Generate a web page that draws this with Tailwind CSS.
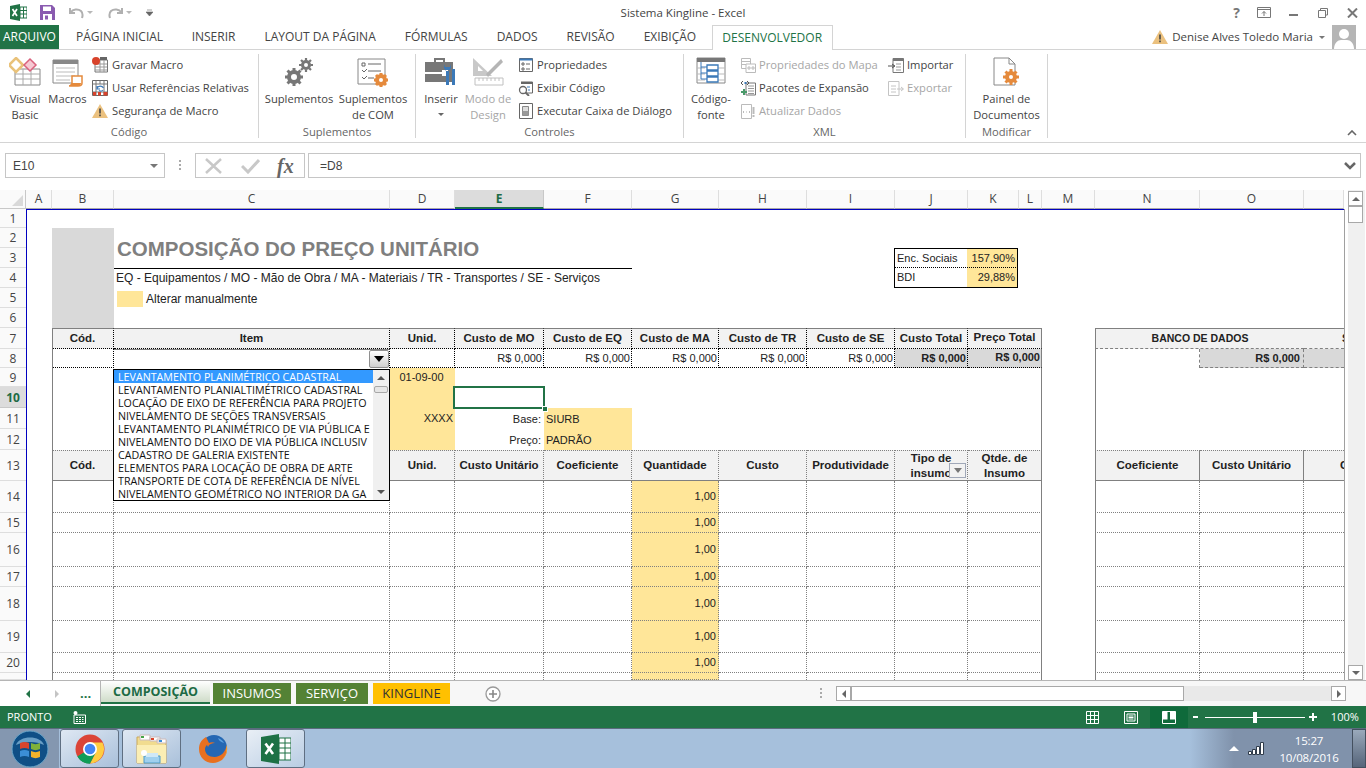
<!DOCTYPE html>
<html lang="pt-BR">
<head>
<meta charset="UTF-8">
<title>Sistema Kingline - Excel</title>
<script src="https://cdn.jsdelivr.net/npm/@tailwindcss/browser@4"></script>
</head>
<body class="w-[1366px] h-[768px] overflow-hidden bg-white font-['Open_Sans',sans-serif] text-[11.2px] text-[#444]">

<!-- title bar -->
<div class="h-[25px] grid grid-cols-[1fr_auto_1fr] items-center">
  <div class="flex items-center h-full">
    <svg class="ml-[10px]" width="17" height="17" viewBox="0 0 17 17"><path d="M0 2 10 0v17L0 15z" fill="#217346"/><path d="M10 3h7v11h-7z" fill="#fff" stroke="#217346"/><path d="M10 6.500h7M10 10h7M13.500 3v11" stroke="#217346"/><path d="M2.500 5 7 12M7 5l-4.500 7" stroke="#fff" stroke-width="1.700"/></svg>
    <svg class="ml-[13px]" width="15" height="15" viewBox="0 0 15 15"><path d="M0 0h12l3 3v12H0z" fill="#8a5bb0"/><path d="M3 1.500h8v4.500H3z" fill="#fff"/><path d="M3 9h9v6H3z" fill="#fff"/><path d="M5 10.500h3v4H5z" fill="#8a5bb0"/></svg>
    <svg class="ml-[14px]" width="15" height="13" viewBox="0 0 15 13"><path d="M1 2v5h5M1.500 6.500C4 3 9 2.500 12 5c2 2 2 4 1 7" fill="none" stroke="#b0b0b0" stroke-width="2"/></svg>
    <span class="ml-[3px] w-0 h-0 border-x-[3px] border-x-transparent border-t-[3px] border-t-[#b8b8b8]"></span>
    <svg class="ml-[15px]" width="15" height="13" viewBox="0 0 15 13"><path d="M14 2v5H9M13.500 6.500C11 3 6 2.500 3 5c-2 2-2 4-1 7" fill="none" stroke="#b0b0b0" stroke-width="2"/></svg>
    <span class="ml-[3px] w-0 h-0 border-x-[3px] border-x-transparent border-t-[3px] border-t-[#b8b8b8]"></span>
    <svg class="ml-[14px]" width="7" height="7" viewBox="0 0 7 7"><path d="M1 1h5M0 3h7L3.500 7z" fill="#666" stroke="#666" stroke-width=".6"/></svg>
  </div>
  <div class="text-[11.5px] text-[#444]">Sistema Kingline - Excel</div>
  <div class="flex items-center justify-end h-full pr-[8px]">
    <span class="text-[14px] font-bold text-[#777] leading-none">?</span>
    <svg class="ml-[17px]" width="14" height="11" viewBox="0 0 14 11"><path d="M.5.500h13v10H.5z" fill="none" stroke="#777"/><path d="M.5 2.500h13M7 9V4.500M5 6.500l2-2 2 2" fill="none" stroke="#777"/></svg>
    <span class="ml-[18px] w-[9px] h-[2px] bg-[#777] mt-[4px]"></span>
    <svg class="ml-[20px]" width="10" height="10" viewBox="0 0 10 10"><path d="M2.500 2.500V.5h7v6.500h-2M.5 2.500h7v7h-7z" fill="none" stroke="#777"/></svg>
    <svg class="ml-[19px]" width="11" height="10" viewBox="0 0 11 10"><path d="M1 .5 10 9.500M10 .5 1 9.500" stroke="#777" stroke-width="2"/></svg>
  </div>
</div>

<!-- ribbon tabs -->
<div class="h-[25px] flex items-stretch border-b border-[#d4d4d4] text-[12px]">
  <div class="w-[59px] bg-[#217346] text-white flex items-center justify-center">ARQUIVO</div>
  <div class="ml-[3px] px-[14px] flex items-center">PÁGINA INICIAL</div>
  <div class="px-[14.500px] flex items-center">INSERIR</div>
  <div class="px-[14.500px] flex items-center">LAYOUT DA PÁGINA</div>
  <div class="px-[14.500px] flex items-center">FÓRMULAS</div>
  <div class="px-[14.500px] flex items-center">DADOS</div>
  <div class="px-[14.500px] flex items-center">REVISÃO</div>
  <div class="px-[14.500px] flex items-center">EXIBIÇÃO</div>
  <div class="ml-[1px] w-[121px] h-[25px] bg-white border border-b-0 border-[#d4d4d4] text-[#217346] flex items-center justify-center">DESENVOLVEDOR</div>
  <div class="ml-auto flex items-center pr-[10px]">
    <svg width="16" height="14" viewBox="0 0 16 14"><path d="M8 0 16 14H0z" fill="#ebc17f"/><path d="M7.200 4.500h1.600v5H7.200zM7.200 10.500h1.600v1.800H7.200z" fill="#444"/></svg>
    <span class="ml-[4px] text-[11.5px]">Denise Alves Toledo Maria</span>
    <span class="ml-[6px] w-0 h-0 border-x-[3px] border-x-transparent border-t-[3px] border-t-[#777]"></span>
    <svg class="ml-[7px]" width="24" height="24" viewBox="0 0 24 24"><path d="M0 0h24v24H0z" fill="#b5b5b5"/><circle cx="12" cy="9" r="5" fill="#fff"/><path d="M2 24c0-6 4-9 7-9h6c3 0 7 3 7 9z" fill="#fff"/></svg>
  </div>
</div>

<!-- ribbon -->
<div class="h-[93px] flex border-b border-[#d4d4d4] relative text-[#444]">
  <div class="w-[259px] h-[84px] mt-[4px] border-r border-[#d4d4d4] flex flex-col">
    <div class="flex-1 flex">
      <div class="w-[50px] flex flex-col items-center">
        <svg class="mt-[3px]" width="32" height="30" viewBox="0 0 32 30"><path d="M6 12h25v16H6z" fill="#fff" stroke="#888"/><path d="M6 17h25M6 22h25M14 12v16M22 12v16" stroke="#aaa"/><path d="M7 1l7 7-7 7-7-7z" fill="#fff" stroke="#e9c27a" stroke-width="2.500"/><path d="M21 2l6 6-6 6-6-6z" fill="#f6c9d3" stroke="#d9627e" stroke-width="1.500"/></svg>
        <div class="mt-[4px] text-center leading-[16px]">Visual<br>Basic</div>
      </div>
      <div class="w-[35px] flex flex-col items-center">
        <svg class="mt-[3px]" width="32" height="30" viewBox="0 0 32 30"><path d="M1 3h25v23H1z" fill="#fff" stroke="#888"/><path d="M1 3h25v4H1z" fill="#888"/><path d="M4 11h19M4 15h19M4 19h19M4 23h14" stroke="#bbb"/><path d="M20 19h10v7c0 2-2 3-4 3h-9c2 0 3-1 3-3z" fill="#fff" stroke="#e58a3c" stroke-width="1.500"/><path d="M17 29h9c2 0 3-1 3-3H20z" fill="#e58a3c"/></svg>
        <div class="mt-[4px] text-center leading-[16px]">Macros</div>
      </div>
      <div class="ml-[7px] flex flex-col pt-[3px] gap-[7px]">
        <div class="flex items-center h-[16px]"><svg width="16" height="16" viewBox="0 0 16 16"><path d="M3 3h12.500v12H3z" fill="#fff" stroke="#777"/><path d="M3 7h12M3 10h12M3 13h12M8 3v12M12 3v12" stroke="#999"/><path d="M8 0h7v3H8z" fill="#666"/><circle cx="4" cy="4" r="4" fill="#d8432b"/></svg><span class="ml-[4px]">Gravar Macro</span></div>
        <div class="flex items-center h-[16px]"><svg width="16" height="16" viewBox="0 0 16 16"><path d="M.5.500h15v15H.5z" fill="#fff" stroke="#666"/><path d="M.5 4h15M.5 12h15M4 .5v15M12 .5v15M8 .5V4M8 12v3.500" stroke="#777"/><path d="M1 12h3v3.500H1zM6 12h3v3.500H6zM11.500 12h4v3.500h-4z" fill="#d8432b"/><path d="M5 8.500C6 5.500 10 5.500 11.500 8M5 6v3h3M7 10.500c1.500 1 3 .8 4-.5" fill="none" stroke="#3b79b8" stroke-width="1.200"/></svg><span class="ml-[4px]">Usar Referências Relativas</span></div>
        <div class="flex items-center h-[16px]"><svg width="16" height="14" viewBox="0 0 16 14"><path d="M8 0 16 14H0z" fill="#ebc17f"/><path d="M7.200 4.500h1.600v5H7.200zM7.200 10.500h1.600v1.800H7.200z" fill="#444"/></svg><span class="ml-[4px]">Segurança de Macro</span></div>
      </div>
    </div>
    <div class="text-center h-[20px] leading-[18px] text-[#666]">Código</div>
  </div>

  <div class="w-[157px] h-[84px] mt-[4px] border-r border-[#d4d4d4] flex flex-col">
    <div class="flex-1 flex pl-[3px]">
      <div class="w-[74px] flex flex-col items-center">
        <svg class="mt-[3px]" width="30" height="30" viewBox="0 0 30 30"><g fill="none" stroke="#777"><circle cx="10" cy="20" r="5" stroke-width="4"/><path d="M10 11v3M10 26v3M1 20h3M16 20h3M3.500 13.500l2.200 2.200M14.300 24.300l2.200 2.200M3.500 26.500l2.200-2.200M14.300 15.700l2.200-2.200" stroke-width="3"/><circle cx="22" cy="8" r="3.500" stroke-width="3"/><path d="M22 1v2.500M22 12.500V15M15 8h2.500M26.500 8H29M17 3l1.800 1.800M25.200 11.200 27 13M17 13l1.800-1.800M25.200 4.800 27 3" stroke-width="2.200"/></g></svg>
        <div class="mt-[4px] leading-[16px]">Suplementos</div>
      </div>
      <div class="w-[74px] flex flex-col items-center">
        <svg class="mt-[3px]" width="32" height="30" viewBox="0 0 32 30"><path d="M1 2h27v25H1z" fill="#fff" stroke="#888"/><path d="M5 6h3v3H5zM11 7h13M5 13l2 2 3-3M11 14h13M5 20l2 2 3-3M11 21h6" fill="none" stroke="#666"/><circle cx="24" cy="23" r="4" fill="#fff" stroke="#e58a3c" stroke-width="4"/><path d="M24 16v3M24 27v3M17 23h3M28 23h3M19 18l2 2M27 26l2 2M19 28l2-2M27 20l2-2" stroke="#e58a3c" stroke-width="3"/></svg>
        <div class="mt-[4px] text-center leading-[16px]">Suplementos<br>de COM</div>
      </div>
    </div>
    <div class="text-center h-[20px] leading-[18px] text-[#666]">Suplementos</div>
  </div>

  <div class="w-[268px] h-[84px] mt-[4px] border-r border-[#d4d4d4] flex flex-col">
    <div class="flex-1 flex pl-[7px]">
      <div class="w-[36px] flex flex-col items-center">
        <svg class="mt-[3px]" width="32" height="30" viewBox="0 0 32 30"><path d="M10 5V2h9v3" fill="none" stroke="#777" stroke-width="2"/><path d="M0 5h28v20H0z" fill="#777"/><path d="M0 15h17v2H0z" fill="#fff"/><path d="M17 13h6v6h-6z" fill="#fff"/><path d="M21 13h3v15h-3zM19 7v4l2 3h3l2-3V7l-1 3h-5z" fill="#3b79b8"/><path d="M27 12h3v16h-3z" fill="#3b79b8"/></svg>
        <div class="mt-[4px] text-center leading-[16px]">Inserir</div>
        <span class="mt-[6px] w-0 h-0 border-x-[3px] border-x-transparent border-t-[3px] border-t-[#666]"></span>
      </div>
      <div class="w-[58px] flex flex-col items-center text-[#a6a6a6]">
        <svg class="mt-[3px]" width="32" height="30" viewBox="0 0 32 30"><path d="M1 1 20 19H1z" fill="#c8c8c8"/><path d="M6 9l5 5H6z" fill="#fff"/><path d="M14 17 29 2l2 3-15 15z" fill="#b5b5b5"/><path d="M3 21h28v7H3z" fill="#fff" stroke="#c0c0c0"/><path d="M7 21v3M11 21v3M15 21v3M19 21v3M23 21v3M27 21v3" stroke="#c0c0c0"/></svg>
        <div class="mt-[4px] text-center leading-[16px]">Modo de<br>Design</div>
      </div>
      <div class="ml-[2px] flex flex-col pt-[3px] gap-[7px]">
        <div class="flex items-center h-[16px]"><svg width="14" height="14" viewBox="0 0 14 14"><path d="M.5.500h13v13H.5z" fill="#fff" stroke="#666"/><path d="M.5.500h13v2H.5z" fill="#3b79b8"/><path d="M3 5h2v2H3zM3 10h2v2H3z" fill="none" stroke="#666"/><path d="M7 6h4M7 11h4" stroke="#666"/></svg><span class="ml-[4px]">Propriedades</span></div>
        <div class="flex items-center h-[16px]"><svg class="-ml-[1px]" width="15" height="15" viewBox="0 0 15 15"><path d="M3 1h11.500v11H8" fill="none" stroke="#666"/><path d="M3 1h11.500v2H3z" fill="#666"/><path d="M9 6h3M10 9h2" stroke="#3b79b8"/><circle cx="5" cy="9" r="3.500" fill="#fff" stroke="#666" stroke-width="1.300"/><path d="M7.500 11.500 11 15" stroke="#666" stroke-width="1.800"/></svg><span class="ml-[4px]">Exibir Código</span></div>
        <div class="flex items-center h-[16px]"><svg width="14" height="16" viewBox="0 0 14 16"><path d="M.5.500h13v15H.5z" fill="#fff" stroke="#666"/><path d="M3.500 3.500h6v9h-6z" fill="#ddd" stroke="#888"/><path d="M3.500 8h6v4.500h-6z" fill="#999"/></svg><span class="ml-[4px]">Executar Caixa de Diálogo</span></div>
      </div>
    </div>
    <div class="text-center h-[20px] leading-[18px] text-[#666]">Controles</div>
  </div>

  <div class="w-[282px] h-[84px] mt-[4px] border-r border-[#d4d4d4] flex flex-col">
    <div class="flex-1 flex">
      <div class="w-[54px] flex flex-col items-center">
        <svg class="mt-[3px]" width="30" height="30" viewBox="0 0 30 30"><path d="M1 1h28v25H1z" fill="#fff" stroke="#888"/><path d="M1 1h28v4H1z" fill="#777"/><path d="M1 11h8M1 17h8M1 23h8M22 11h7M22 17h7M22 23h7" stroke="#bbb"/><path d="M5 5v17h6M5 10h6M5 16h6" fill="none" stroke="#3b79b8"/><path d="M11 8h11v5H11zM11 14h11v5H11zM11 20h11v5H11z" fill="#fff" stroke="#3b79b8" stroke-width="1.300"/></svg>
        <div class="mt-[4px] text-center leading-[16px]">Código-<br>fonte</div>
      </div>
      <div class="ml-[3px] w-[147px] flex flex-col pt-[3px] gap-[7px]">
        <div class="flex items-center h-[16px] text-[#a6a6a6]"><svg width="15" height="15" viewBox="0 0 15 15" fill="none" stroke="#bbb"><path d="M.5.500h9v10h-9z"/><path d="M.5 3.500h9M.5 6.500h9" /><path d="M5 6h9.500v8.500H5z" fill="#fff"/><path d="M7 9h2v2H7zM11 9h2v2h-2z"/></svg><span class="ml-[3px]">Propriedades do Mapa</span></div>
        <div class="flex items-center h-[16px]"><svg width="15" height="16" viewBox="0 0 15 16"><path d="M5 3h9.500v12H5z" fill="#fff" stroke="#777"/><path d="M7 6h6M7 8.500h6M7 11h6M7 13.500h6" stroke="#999"/><path d="M0 3l2-2M0 3l2 2M6 1l2 2-2 2" fill="none" stroke="#555"/><path d="M3.500 2h2v2h-2z" fill="#3b79b8"/><path d="M3 9v6M0 12h6" stroke="#4a9a6a" stroke-width="2"/></svg><span class="ml-[3px]">Pacotes de Expansão</span></div>
        <div class="flex items-center h-[16px] text-[#a6a6a6]"><svg width="15" height="15" viewBox="0 0 15 15" fill="none" stroke="#bbb"><path d="M.5.500h10v14H.5z"/><path d="M3 7l-1 1 1 1M8 7l1 1-1 1M5 8h1" /><path d="M12.500 3v7M12.500 11v2" stroke-width="2"/></svg><span class="ml-[3px]">Atualizar Dados</span></div>
      </div>
      <div class="flex flex-col pt-[3px] gap-[7px]">
        <div class="flex items-center h-[16px]"><svg width="16" height="15" viewBox="0 0 16 15"><path d="M5 .5h10.500v14H5z" fill="#fff" stroke="#777"/><path d="M5 .5h10.500v2.500H5z" fill="#777"/><path d="M8 6h5M8 9h5M8 12h5" stroke="#999"/><path d="M0 8h6M4 6l3 2-3 2" fill="none" stroke="#555"/></svg><span class="ml-[3px]">Importar</span></div>
        <div class="flex items-center h-[16px] text-[#a6a6a6]"><svg width="16" height="15" viewBox="0 0 16 15" fill="none" stroke="#c4c4c4"><path d="M.5.500h10.500v14H.5z"/><path d="M3 5h5M3 8h5M3 11h5"/><path d="M9 8h6M13 6l2.500 2-2.500 2"/></svg><span class="ml-[3px]">Exportar</span></div>
      </div>
    </div>
    <div class="text-center h-[20px] leading-[18px] text-[#666]">XML</div>
  </div>

  <div class="w-[82px] h-[84px] mt-[4px] border-r border-[#d4d4d4] flex flex-col">
    <div class="flex-1 flex flex-col items-center">
      <svg class="mt-[3px]" width="28" height="30" viewBox="0 0 28 30"><path d="M1 1h15l6 6v12M22 20v8H1V1" fill="#fff" stroke="#888"/><path d="M16 1v6h6" fill="none" stroke="#888"/><circle cx="18" cy="20" r="4" fill="#fff" stroke="#e58a3c" stroke-width="4"/><path d="M18 12v3M18 25v3M10 20h3M23 20h3M12.500 14.500l2 2M21.500 23.500l2 2M12.500 25.500l2-2M21.500 16.500l2-2" stroke="#e58a3c" stroke-width="3"/></svg>
      <div class="mt-[4px] text-center leading-[16px]">Painel de<br>Documentos</div>
    </div>
    <div class="text-center h-[20px] leading-[18px] text-[#666]">Modificar</div>
  </div>
  <svg class="absolute left-[1347px] top-[80px]" width="10" height="6" viewBox="0 0 10 6"><path d="M1 5l4-4 4 4" fill="none" stroke="#666" stroke-width="1.600"/></svg>
</div>

<!-- formula bar -->
<div class="h-[47px] flex items-start pt-[10px] text-[#444]">
  <div class="ml-[5px] w-[160px] h-[25px] border border-[#c6c6c6] flex items-center pl-[7px] text-[12px] font-['Liberation_Sans',sans-serif]">E10<span class="ml-auto mr-[6px] w-0 h-0 border-x-[4px] border-x-transparent border-t-[4px] border-t-[#777]"></span></div>
  <div class="w-[30px] h-[25px] flex items-center justify-center"><svg width="3" height="11" viewBox="0 0 3 11"><path d="M0 0h2v2H0zM0 4h2v2H0zM0 8h2v2H0z" fill="#aaa"/></svg></div>
  <div class="w-[110px] h-[25px] border border-[#c6c6c6] flex items-center pl-[9px]">
    <svg width="18" height="16" viewBox="0 0 18 16"><path d="M1 1 16 15M16 1 1 15" stroke="#c8c8c8" stroke-width="2.500"/></svg>
    <svg class="ml-[18px]" width="19" height="16" viewBox="0 0 19 16"><path d="M1 8l6 6L18 2" fill="none" stroke="#c8c8c8" stroke-width="3"/></svg>
    <span class="ml-[17px] font-['Liberation_Serif',serif] italic font-bold text-[20px] leading-none text-[#666]">fx</span>
  </div>
  <div class="ml-[3px] w-[1053px] h-[25px] border border-[#c6c6c6] flex items-center pl-[11px] pr-[4px] text-[12px] font-['Liberation_Sans',sans-serif]">=D8<svg class="ml-auto" width="12" height="8" viewBox="0 0 12 8"><path d="M1 1l5 5 5-5" fill="none" stroke="#666" stroke-width="2.500"/></svg></div>
</div>

<!-- sheet -->
<div class="h-[490px] flex relative overflow-hidden">
  <div id="sheet" class="w-[1344px] grid grid-cols-[26px_26px_62px_276px_65px_89px_88px_87px_88px_88px_73px_51px_23px_53px_105px_104px_40px] grid-rows-[19px_19px_20px_20px_20px_20px_20px_21px_19px_19px_21px_21px_21px_31px_32px_20px_34px_20px_34px_32px_20px_7px] font-['Liberation_Sans',sans-serif] text-[11px] text-[#222]"></div>

  <!-- frozen-pane lines -->
  <div class="absolute left-[26px] top-[19px] w-px h-[471px] bg-[#0000c0]"></div>
  <div class="absolute left-[26px] top-[19px] w-[1318px] h-px bg-[#0000c0]"></div>
  <div class="absolute left-[1344px] top-[19px] w-px h-[471px] bg-[#a0a0a0]"></div>

  <!-- list of the cell C8 -->
  <div class="absolute left-[369px] top-[160px] w-[20px] h-[18px] border border-[#8f8f8f] rounded-[2px] bg-gradient-to-b from-white to-[#cfcfcf] flex items-center justify-center"><span class="w-0 h-0 border-x-[5px] border-x-transparent border-t-[6px] border-t-black"></span></div>
  <div class="absolute left-[113px] top-[179px] w-[277px] h-[132px] border border-black bg-white flex font-['Open_Sans',sans-serif] text-[10.700px] text-[#111] leading-[14px]">
    <div class="w-[259px] overflow-hidden whitespace-nowrap">
      <div class="h-[13px] bg-[#3399ff] text-white pl-[4px]">LEVANTAMENTO PLANIMÉTRICO CADASTRAL</div>
      <div class="h-[13px] pl-[4px]">LEVANTAMENTO PLANIALTIMÉTRICO CADASTRAL</div>
      <div class="h-[13px] pl-[4px]">LOCAÇÃO DE EIXO DE REFERÊNCIA PARA PROJETO</div>
      <div class="h-[13px] pl-[4px]">NIVELAMENTO DE SEÇÕES TRANSVERSAIS</div>
      <div class="h-[13px] pl-[4px]">LEVANTAMENTO PLANIMÉTRICO DE VIA PÚBLICA E</div>
      <div class="h-[13px] pl-[4px]">NIVELAMENTO DO EIXO DE VIA PÚBLICA INCLUSIV</div>
      <div class="h-[13px] pl-[4px]">CADASTRO DE GALERIA EXISTENTE</div>
      <div class="h-[13px] pl-[4px]">ELEMENTOS PARA LOCAÇÃO DE OBRA DE ARTE</div>
      <div class="h-[13px] pl-[4px]">TRANSPORTE DE COTA DE REFERÊNCIA DE NÍVEL</div>
      <div class="h-[13px] pl-[4px]">NIVELAMENTO GEOMÉTRICO NO INTERIOR DA GA</div>
    </div>
    <div class="flex-1 bg-[#f0f0f0] flex flex-col items-center">
      <span class="mt-[6px] w-0 h-0 border-x-[4px] border-x-transparent border-b-[4px] border-b-[#555]"></span>
      <span class="mt-[6px] w-[14px] h-[7px] bg-[#e6e6e6] border border-[#a8a8a8] rounded-[2px]"></span>
      <span class="mt-auto mb-[6px] w-0 h-0 border-x-[4px] border-x-transparent border-t-[4px] border-t-[#555]"></span>
    </div>
  </div>

  <!-- vertical scrollbar -->
  <div class="ml-[1px] w-[21px] flex flex-col bg-white pl-[3px]">
    <div class="w-[17px] h-full bg-[#f0f0f0] flex flex-col">
      <div class="mt-[1px] w-[15px] h-[15px] bg-white border border-[#a8a8a8] flex items-center justify-center"><span class="w-0 h-0 border-x-[4px] border-x-transparent border-b-[4px] border-b-[#666]"></span></div>
      <div class="w-[15px] h-[17px] bg-white border border-[#a8a8a8]"></div>
      <div class="mt-auto w-[15px] h-[15px] bg-white border border-[#a8a8a8] flex items-center justify-center"><span class="w-0 h-0 border-x-[4px] border-x-transparent border-t-[4px] border-t-[#666]"></span></div>
    </div>
  </div>
</div>

<!-- sheet tabs -->
<div class="h-[26px] flex items-stretch bg-[#f7f7f7] border-t border-[#b5b5b5] relative">
  <div class="w-[101px] bg-white border-r border-[#b5b5b5] flex items-center">
    <span class="ml-[26px] w-0 h-0 border-y-[4px] border-y-transparent border-r-[4px] border-r-[#217346]"></span>
    <span class="ml-[25px] w-0 h-0 border-y-[4px] border-y-transparent border-l-[4px] border-l-[#c4c4c4]"></span>
    <span class="ml-[21px] text-[13px] font-bold text-[#217346] leading-none">...</span>
  </div>
  <div class="w-[109px] mb-[2px] pt-[2px] bg-gradient-to-b from-white to-[#cfdcc9] border-b-2 border-[#217346] flex items-center justify-center font-bold text-[12.500px] text-[#1d6b45]">COMPOSIÇÃO</div>
  <div class="ml-[3px] w-[78px] my-[2px] bg-[#548235] text-white flex items-center justify-center text-[13px]">INSUMOS</div>
  <div class="ml-[5px] w-[72px] my-[2px] bg-[#548235] text-white flex items-center justify-center text-[13px]">SERVIÇO</div>
  <div class="ml-[5px] w-[77px] my-[2px] bg-[#ffc000] text-[#333] flex items-center justify-center text-[13px]">KINGLINE</div>
  <svg class="ml-[35px] self-center" width="16" height="16" viewBox="0 0 16 16"><circle cx="8" cy="8" r="7" fill="#fff" stroke="#999" stroke-width="1.300"/><path d="M4 8h8M8 4v8" stroke="#888" stroke-width="1.600"/></svg>
  <svg class="ml-[319px] self-center" width="3" height="11" viewBox="0 0 3 11"><path d="M0 0h2v2H0zM0 4h2v2H0zM0 8h2v2H0z" fill="#aaa"/></svg>
  <div class="ml-[13px] self-center w-[510px] h-[15px] bg-[#e9e9e9] flex">
    <div class="w-[15px] h-[15px] bg-white border border-[#a8a8a8] flex items-center justify-center"><span class="w-0 h-0 border-y-[4px] border-y-transparent border-r-[4px] border-r-[#666]"></span></div>
    <div class="w-[333px] h-[15px] bg-white border border-[#a8a8a8]"></div>
    <div class="ml-auto w-[15px] h-[15px] bg-white border border-[#a8a8a8] flex items-center justify-center"><span class="w-0 h-0 border-y-[4px] border-y-transparent border-l-[4px] border-l-[#666]"></span></div>
  </div>
</div>

<!-- status bar -->
<div class="h-[22px] bg-[#217346] text-white flex items-center relative">
  <span class="ml-[7px] text-[11px]">PRONTO</span>
  <svg class="ml-[21px]" width="13" height="13" viewBox="0 0 13 13"><path d="M1 4h11.500v8.500H1z" fill="none" stroke="#fff"/><path d="M3 6.500h7.500M3 8.500h7.500M3 10.500h7.500" stroke="#fff" stroke-dasharray="2 1"/><circle cx="2.500" cy="2" r="2" fill="#fff"/></svg>
  <svg class="ml-[1000px]" width="13" height="13" viewBox="0 0 13 13"><path d="M.5.500h12v12H.5zM4.500.5v12M8.500.5v12M.5 4.500h12M.5 8.500h12" fill="none" stroke="#fff"/></svg>
  <svg class="ml-[25px]" width="14" height="13" viewBox="0 0 14 13"><path d="M.5.500h13v12H.5z" fill="none" stroke="#fff"/><path d="M3 3h8v7H3z" fill="none" stroke="#fff"/><path d="M4.500 5h5M4.500 6.500h5M4.500 8h5" stroke="#fff"/></svg>
  <div class="ml-[12px] w-[38px] h-[21px] bg-[#0f6a3b] flex items-center justify-center"><svg width="14" height="13" viewBox="0 0 14 13"><path d="M.5.500h13v12H.5z" fill="none" stroke="#fff"/><path d="M.5 .5h5v8h-5zM8 .5h5.500v8H8z" fill="#fff"/></svg></div>
  <span class="ml-[5px] w-[5px] h-[2px] bg-white"></span>
  <div class="ml-[7px] w-[100px] h-px bg-white relative"><span class="absolute left-[48px] -top-[5px] w-[4px] h-[11px] bg-white"></span></div>
  <svg class="ml-[4px]" width="8" height="8" viewBox="0 0 8 8"><path d="M0 4h8M4 0v8" stroke="#fff" stroke-width="2"/></svg>
  <span class="ml-[14px] text-[11px]">100%</span>
</div>

<!-- windows taskbar -->
<div class="h-[40px] flex items-stretch bg-[#a6c0dc] border-t border-[#5b6b7d] relative">
  <div class="w-[59px] bg-[#8497b0] flex items-center justify-center">
    <svg width="38" height="38" viewBox="0 0 38 38"><circle cx="19" cy="19" r="18" fill="#0f4f86" stroke="#6aa5c8"/><path d="M5 15C8 5 30 5 33 15 25 11 13 11 5 15z" fill="#8fc0e0" opacity=".7"/><path d="M9 13c3-1.500 6-1.500 9 0v6c-3-1.500-6-1.500-9 0z" fill="#d9452c"/><path d="M20 13c3 1.500 6 1.500 9 0v6c-3 1.500-6 1.500-9 0z" fill="#7fb23a"/><path d="M9 21c3-1.500 6-1.500 9 0v6c-3-1.500-6-1.500-9 0z" fill="#3b8ed6"/><path d="M20 21c3 1.500 6 1.500 9 0v6c-3 1.500-6 1.500-9 0z" fill="#f1b22c"/></svg>
  </div>
  <div class="ml-[1px] w-[59px] border border-[#5f6f82] rounded-[3px] bg-gradient-to-br from-[#dfe8f3] to-[#a9c0da] flex items-center justify-center">
    <svg width="30" height="30" viewBox="0 0 30 30"><circle cx="15" cy="15" r="14.500" fill="#db4437"/><path d="M15 15 2.500 22.500A14.500 14.500 0 0 0 15 29.500z" fill="#0f9d58"/><path d="M15 8.500h12.500A14.500 14.500 0 0 1 15 29.500L21 18z" fill="#ffcd40"/><path d="M2.500 22.500A14.500 14.500 0 0 0 15 29.500L21 18l-6-3z" fill="#0f9d58"/><circle cx="15" cy="15" r="7" fill="#fff"/><circle cx="15" cy="15" r="5.300" fill="#4285f4"/></svg>
  </div>
  <div class="ml-[3px] w-[59px] border border-[#5f6f82] rounded-[3px] bg-gradient-to-br from-[#dfe8f3] to-[#a9c0da] flex items-center justify-center">
    <svg width="32" height="30" viewBox="0 0 32 30"><path d="M1 3h11l2 3h16v23H1z" fill="#f1dc8f" stroke="#c9a75c"/><path d="M4 1h10v5H4zM14 3h10v4H14zM21 5h9v4h-9z" fill="#fff" stroke="#cbb"/><path d="M5 2h3v2H5z" fill="#46a546"/><path d="M15 4h3v2h-3z" fill="#d9452c"/><path d="M23 6h3v2h-3z" fill="#3b8ed6"/><path d="M1 11h29v18H1z" fill="#fbeeb4"/><path d="M8 22h16v7H8z" fill="#9fd0ee" stroke="#4d9ac9"/><path d="M10 19h12v4H10z" fill="#cfe8f7"/><circle cx="8" cy="19" r="3" fill="#fff"/></svg>
  </div>
  <div class="w-[64px] flex items-center justify-center">
    <svg width="30" height="30" viewBox="0 0 30 30"><circle cx="16" cy="14" r="13" fill="#2467b3"/><path d="M20 4c3 1 5 3 6 5-3-1-5-2-6-5z" fill="#5aa0de"/><path d="M8 3C3 6 1 10 1 15c0 8 6 14 14 14 7 0 13-5 14-12 .3-2 .2-4-.5-6-.5 7-6 12-12 12C11 23 7 20 7 15c0-2 1-3 2-4l1 2c1-3 4-4 7-4-2-1-4-1-6 0-1-2-2-4-3-6z" fill="#e8701f"/><path d="M28.500 11c1 3 .8 7-1 10-2 4-6 7-11 8 6-1 10-5 11.500-10 .6-2.500.7-5.500.5-8z" fill="#f8c13a"/></svg>
  </div>
  <div class="ml-[1px] w-[59px] border border-[#5f6f82] rounded-[3px] bg-gradient-to-br from-[#e9eff6] to-[#b9cde3] flex items-center justify-center">
    <svg width="30" height="30" viewBox="0 0 30 30"><path d="M0 3 18 0v30L0 27z" fill="#1d7145"/><path d="M18 4h12v22H18z" fill="#fff" stroke="#1d7145"/><path d="M18 9h12M18 14h12M18 19h12M24 4v22" stroke="#1d7145"/><path d="M4.500 9.500 12 20M12 9.500 4.500 20" stroke="#fff" stroke-width="2.600"/></svg>
  </div>
  <div class="ml-auto w-[176px] bg-gradient-to-r from-[#a6c0dc] to-[#8092ab] to-[25%] flex items-center relative">
    <span class="ml-[39px] w-0 h-0 border-x-[5px] border-x-transparent border-b-[5px] border-b-white"></span>
    <svg class="ml-[9px]" width="17" height="13" viewBox="0 0 17 13"><path d="M.5 9.500h3v3h-3zM4.500 7.500h3v5h-3zM8.500 4.500h3v8h-3zM12.500.5h3v12h-3z" fill="#fff" stroke="#2f3b4a"/></svg>
    <div class="ml-[13px] w-[62px] text-center text-white text-[11.500px] leading-[17px] tracking-[-0.2px]">15:27<br>10/08/2016</div>
    <div class="ml-auto w-[14px] h-full border border-[#44505f] bg-gradient-to-b from-[#9aa9bb] to-[#56657a]"></div>
  </div>
</div>

<script>
  // Builds the worksheet cells; columns are 1 = row header, 2 = A, 3 = B ... 17 = P
  const sheet = document.getElementById('sheet');
  let html = '';
  const cell = (col, row, cls, txt = '', span = 1, rowSpan = 1) => {
    html += `<div class="${cls}" style="grid-column:${col}/span ${span};grid-row:${row}/span ${rowSpan}">${txt}</div>`;
  };
  const g = r => r + 1; // sheet row -> grid row

  // column headers (P is wide and its letter lies past the window)
  cell(1, 1, 'bg-[#fafafa] border-r border-b border-[#c8c8c8] flex items-end justify-end', '<span class="w-0 h-0 border-l-[11px] border-l-transparent border-b-[11px] border-b-[#d9d9d9] mr-[2px] mb-[2px]"></span>');
  ['A','B','C','D','E','F','G','H','I','J','K','L','M','N','O',''].forEach((name, i) => {
    if (name === 'E') {
      cell(i + 2, 1, "bg-[#dcdcdc] border-r border-b-2 border-r-[#c8c8c8] border-b-[#217346] flex items-center justify-center font-['Open_Sans',sans-serif] font-bold text-[12px] text-[#1d6b45]", name);
    } else {
      cell(i + 2, 1, "bg-[#fafafa] border-r border-b border-r-[#dedede] border-b-[#a8a8a8] flex items-center justify-center font-['Open_Sans',sans-serif] text-[12px] text-[#444]", name);
    }
  });

  // row headers
  for (let r = 1; r <= 21; r++) {
    const label = r === 21 ? '' : r;
    if (r === 10) {
      cell(1, g(r), "bg-[#dcdcdc] border-b border-[#c8c8c8] flex items-center justify-center pt-px font-['Open_Sans',sans-serif] font-bold text-[12px] text-[#1d6b45]", label);
    } else {
      cell(1, g(r), "bg-[#fafafa] border-b border-[#dedede] flex items-center justify-center pt-px font-['Open_Sans',sans-serif] text-[12px] text-[#444]", label);
    }
  }

  // title block
  cell(3, g(2), 'bg-[#d9d9d9]', '', 1, 5);
  cell(4, g(2), 'font-bold text-[20.500px] text-[#7f7f7f] whitespace-nowrap pl-[3px] pt-[9px] leading-[24px]', 'COMPOSIÇÃO DO PREÇO UNITÁRIO', 4);
  cell(4, g(4), 'border-t border-black text-[12px] whitespace-nowrap pl-[2px] leading-[18px]', 'EQ - Equipamentos / MO - Mão de Obra / MA - Materiais / TR - Transportes / SE - Serviços', 4);
  cell(4, g(5), 'flex items-center text-[12px] whitespace-nowrap pl-[3px] pt-[2px]', '<span class="w-[26px] h-[16px] bg-[#ffe699] mr-[3px]"></span>Alterar manualmente', 4);

  // encargos box
  cell(11, g(3), '-ml-px border-l border-t border-black border-b border-b-black [border-bottom-style:dotted] border-r border-r-[#b0b0b0] pl-[2px] flex items-center', 'Enc. Sociais');
  cell(12, g(3), '-ml-px mr-px border-t border-r border-black border-b border-b-black [border-bottom-style:dotted] bg-[#ffe699] flex items-center justify-end pr-[2px]', '157,90%');
  cell(11, g(4), '-ml-px border-l border-b border-black border-r border-r-[#b0b0b0] pl-[2px] flex items-center', 'BDI');
  cell(12, g(4), '-ml-px mr-px border-r border-b border-black bg-[#ffe699] flex items-center justify-end pr-[2px]', '29,88%');

  // header row 7
  const head7 = 'bg-[#f2f2f2] border-t border-t-[#808080] border-r border-r-black [border-right-style:dotted] border-b border-b-black [border-bottom-style:dotted] font-bold text-[11.500px] flex items-center justify-center whitespace-nowrap overflow-hidden';
  [[3,'Cód.'],[4,'Item'],[5,'Unid.'],[6,'Custo de MO'],[7,'Custo de EQ'],[8,'Custo de MA'],[9,'Custo de TR'],[10,'Custo de SE'],[11,'Custo Total']].forEach(([c, t]) => cell(c, g(7), head7, t));
  cell(3, g(7), 'border-l border-[#808080] w-px h-full');
  cell(12, g(7), 'bg-[#f2f2f2] border-t border-r border-[#808080] border-b [border-bottom-style:dotted] border-b-black font-bold text-[11.500px] flex items-center justify-center whitespace-nowrap pb-[2px]', 'Preço Total', 2);

  // row 8
  const row8 = 'border-r border-r-black [border-right-style:dotted] border-b border-b-black [border-bottom-style:dotted] flex items-center justify-end pr-[1px] text-[11px]';
  cell(3, g(8), row8);
  cell(3, g(8), 'border-l border-[#808080] w-px h-full');
  cell(4, g(8), 'border-r border-r-black [border-right-style:dotted] border-t border-t-[#808080]');
  cell(5, g(8), row8);
  [6,7,8,9,10].forEach(c => cell(c, g(8), row8, 'R$ 0,000'));
  cell(11, g(8), `${row8} bg-[#d9d9d9] font-bold`, 'R$ 0,000');
  cell(12, g(8), 'bg-[#d9d9d9] border-r border-r-[#808080] border-b border-b-black [border-bottom-style:dotted] flex items-center justify-end pr-[1px] pb-[2px] font-bold', 'R$ 0,000', 2);

  // rows 9 to 12
  for (let r = 9; r <= 12; r++) {
    cell(3, g(r), 'border-l border-[#808080] w-px h-full');
    cell(13, g(r), 'border-r border-[#808080]');
    cell(5, g(r), 'bg-[#ffe699] flex items-center pr-[2px]' + (r === 9 ? ' justify-center' : ' justify-end'), r === 9 ? '01-09-00' : r === 11 ? 'XXXX' : '');
  }
  cell(6, g(10), 'relative', '<div class="absolute -left-[2px] -top-px w-[92px] h-[23px] border-2 border-[#217346]"></div><div class="absolute left-[87px] top-[19px] w-[6px] h-[6px] bg-[#217346] border border-white z-10"></div>');
  cell(6, g(11), 'flex items-center justify-end pr-[3px] pt-px', 'Base:');
  cell(6, g(12), 'flex items-center justify-end pr-[3px] pt-px', 'Preço:');
  cell(7, g(11), 'bg-[#ffe699] flex items-center pl-[2px] pt-px', 'SIURB');
  cell(7, g(12), 'bg-[#ffe699] flex items-center pl-[2px] pt-px', 'PADRÃO');

  // header row 13
  const head13 = 'bg-[#f2f2f2] border-t border-r border-dotted border-t-[#808080] border-r-[#808080] border-b border-b-[#808080] [border-bottom-style:solid] font-bold text-[11.500px] leading-[15px] flex items-center justify-center text-center whitespace-nowrap';
  [[3,'Cód.'],[4,''],[5,'Unid.'],[6,'Custo Unitário'],[7,'Coeficiente'],[8,'Quantidade'],[9,'Custo'],[10,'Produtividade']].forEach(([c, t]) => cell(c, g(13), head13, t));
  cell(3, g(13), 'border-l border-[#808080] w-px h-full');
  cell(11, g(13), `${head13} relative`, 'Tipo de<br>insumo<span class="absolute right-[1px] bottom-[2px] w-[17px] h-[15px] bg-[#f2f2f2] border border-[#a0a8b8] flex items-center justify-center"><span class="w-0 h-0 border-x-[4px] border-x-transparent border-t-[5px] border-t-[#777]"></span></span>');
  cell(12, g(13), `${head13} border-r-[#808080] [border-right-style:solid]`, 'Qtde. de<br>Insumo', 2);

  // data rows 14 to 20, and the visible top of row 21
  const data = 'border-r border-b border-dotted border-[#808080]';
  for (let r = 14; r <= 21; r++) {
    const last = r === 21;
    cell(3, g(r), 'border-l border-[#808080] w-px h-full');
    [3,4,5,6,7,9,10,11].forEach(c => cell(c, g(r), last ? 'border-r border-dotted border-[#808080]' : data));
    cell(8, g(r), `${data} bg-[#ffe699] flex items-center justify-end pr-[2px]`, last ? '' : '1,00');
    cell(12, g(r), `${last ? '' : 'border-b border-dotted border-b-[#808080]'} border-r border-r-[#808080] [border-right-style:solid]`, '', 2);
  }

  // second table, row 7 and 8
  cell(15, g(7), 'bg-[#f2f2f2] border-t border-l border-[#808080] border-b border-b-[#808080] [border-bottom-style:dashed] font-bold text-[10.500px] flex items-center justify-center', 'BANCO DE DADOS', 2);
  cell(17, g(7), 'bg-[#f2f2f2] border-t border-[#808080] border-b border-b-[#808080] [border-bottom-style:dashed] font-bold text-[10.500px] flex items-center pl-[38px] overflow-hidden', 'S');
  cell(15, g(8), 'border-l border-[#808080] border-r border-r-[#808080] [border-right-style:dashed]');
  cell(16, g(8), 'bg-[#d9d9d9] border-r border-r-[#808080] border-b border-dashed border-b-[#808080] flex items-center justify-end pr-[3px] font-bold', 'R$ 0,000');
  cell(17, g(8), 'bg-[#d9d9d9] border-b border-dashed border-b-[#808080]');
  for (let r = 9; r <= 12; r++) cell(15, g(r), 'border-l border-[#808080]');

  // second table, row 13 and below
  cell(15, g(13), 'bg-[#f2f2f2] border-l border-t border-r border-b border-[#808080] [border-top-style:dotted] font-bold text-[11.500px] flex items-center justify-center', 'Coeficiente');
  cell(16, g(13), 'bg-[#f2f2f2] border-t border-r border-b border-[#808080] [border-top-style:dotted] font-bold text-[11.500px] flex items-center justify-center', 'Custo Unitário');
  cell(17, g(13), 'bg-[#f2f2f2] border-t border-b border-[#808080] [border-top-style:dotted] font-bold text-[11.500px] flex items-center pl-[36px] overflow-hidden', 'C');
  for (let r = 14; r <= 21; r++) {
    const bottom = r === 21 ? '' : 'border-b border-dotted border-b-[#808080]';
    cell(15, g(r), `border-l border-l-[#808080] [border-left-style:solid] border-r border-r-[#808080] [border-right-style:dotted] ${bottom}`);
    cell(16, g(r), `border-r border-r-[#808080] [border-right-style:dotted] ${bottom}`);
    cell(17, g(r), bottom);
  }

  sheet.innerHTML = html;
</script>
</body>
</html>
